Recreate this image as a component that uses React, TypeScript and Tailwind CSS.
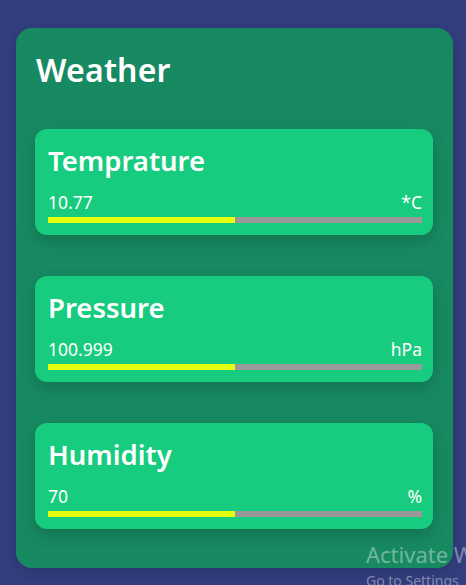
import React from 'react';

const items = [
  { name: 'Temprature', value: '10.77', unit: '*C' },
  { name: 'Pressure', value: '100.999', unit: 'hPa' },
  { name: 'Humidity', value: '70', unit: '%' },
];

const App = () => {
  return (
    <div
      className="relative min-h-[585px] w-full overflow-hidden bg-[#333f80] pt-[28px] pl-[16px]"
      style={{ fontFamily: '"Noto Sans", "Open Sans", sans-serif' }}
    >
      <div className="w-[437px] rounded-[16px] bg-[#178a62] px-[19px] pt-[14px] pb-[39px] shadow-[0_4px_20px_rgba(0,0,0,0.2)]">
        <h1 className="ml-px text-[32px] font-semibold leading-[56px] tracking-[0.2px] text-white">Weather</h1>
        <div className="mt-[31px] flex w-[398px] flex-col gap-[41px]">
          {items.map((item) => (
            <div
              key={item.name}
              className="h-[106px] rounded-[12px] bg-[#17cc7e] pl-[13px] pr-[11px] pt-[12px] shadow-[0_6px_16px_rgba(0,0,0,0.18)]"
            >
              <div className="text-[27.5px] font-semibold leading-[40px] text-white">{item.name}</div>
              <div className="mt-[11px] flex items-end justify-between text-[17.5px] leading-[20px] text-white">
                <span>{item.value}</span>
                <span>{item.unit}</span>
              </div>
              <div className="mt-[5px] flex h-[6px] w-full bg-[#999999]">
                <div className="h-full w-1/2 bg-[#e5ff10]" />
              </div>
            </div>
          ))}
        </div>
      </div>
      <div className="pointer-events-none absolute left-[366px] top-[540px] w-[100px] overflow-hidden">
        <div className="whitespace-nowrap text-[22px] leading-[28px] text-white/40">Activate Windows</div>
        <div className="mt-[4px] whitespace-nowrap text-[14px] leading-[18px] text-white/40">Go to Settings</div>
      </div>
    </div>
  );
};

export default App;
